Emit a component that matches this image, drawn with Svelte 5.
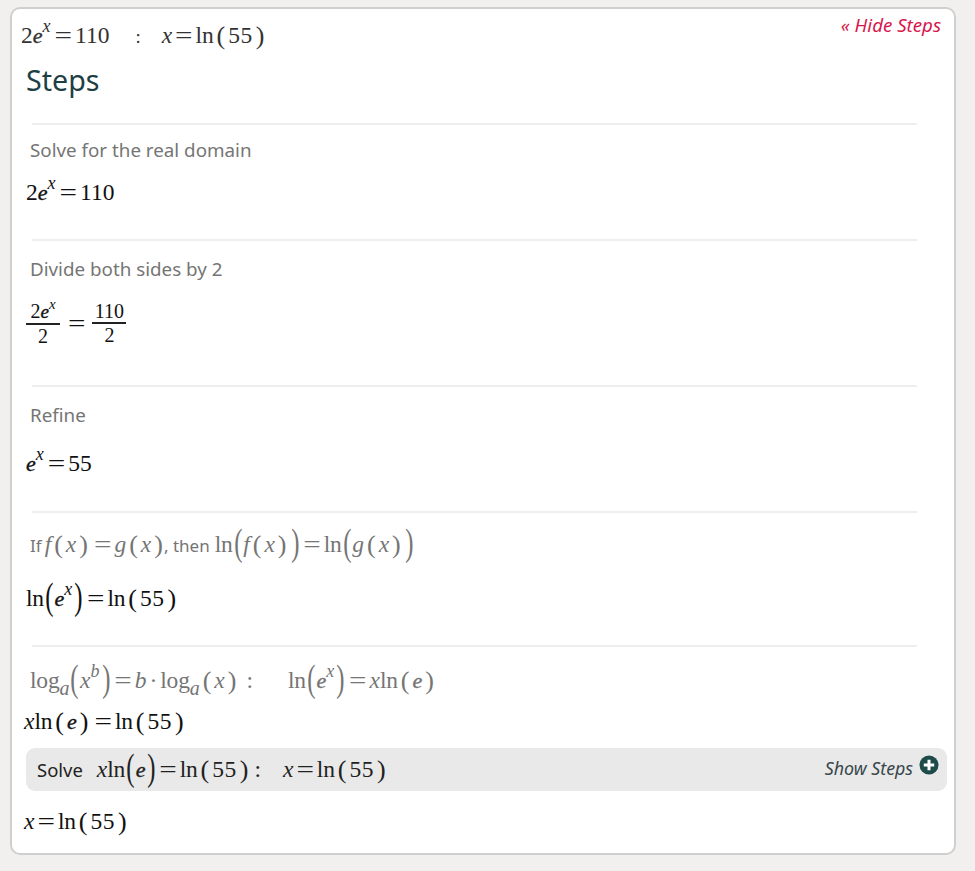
<script>
  let showSteps = $state(true);
</script>

{#snippet ex(base)}<i class="e">{base}</i><sup>x</sup>{/snippet}
{#snippet eq()}<span class="eq">=</span>{/snippet}
{#snippet ln55()}<span class="fn">ln</span><span class="p">(</span><span class="num">55</span><span class="p">)</span>{/snippet}
{#snippet big(ch)}<span class="bp">{ch}</span>{/snippet}

<div class="card">
  <div class="head">
    <div class="math head-math">
      2{@render ex('e')}{@render eq()}110<span class="sep">:</span><i>x</i>{@render eq()}{@render ln55()}
    </div>
    <button type="button" class="toggle" onclick={() => (showSteps = !showSteps)}>« Hide Steps</button>
  </div>

  <h2>Steps</h2>

  <div class="step s1">
    <div class="title">Solve for the real domain</div>
    <div class="math">2{@render ex('e')}{@render eq()}110</div>
  </div>

  <div class="step s2">
    <div class="title">Divide both sides by 2</div>
    <div class="math frac-row">
      <span class="frac"><span class="top">2{@render ex('e')}</span><span>2</span></span>
      {@render eq()}
      <span class="frac"><span class="top">110</span><span>2</span></span>
    </div>
  </div>

  <div class="step s3">
    <div class="title">Refine</div>
    <div class="math">{@render ex('e')}{@render eq()}55</div>
  </div>

  <div class="step s4">
    <div class="title math-title">
      <span class="txt if">If</span><i>f</i><span class="p">(</span><i>x</i><span class="p">)</span>{@render eq()}<i>g</i><span class="p">(</span><i>x</i><span class="p">)</span><span class="txt then">, then</span><span class="fn">ln</span>{@render big('(')}<i>f</i><span class="p">(</span><i>x</i><span class="p">)</span>{@render big(')')}{@render eq()}<span class="fn">ln</span>{@render big('(')}<i>g</i><span class="p">(</span><i>x</i><span class="p">)</span>{@render big(')')}
    </div>
    <div class="math"><span class="fn">ln</span>{@render big('(')}{@render ex('e')}{@render big(')')}{@render eq()}{@render ln55()}</div>
  </div>

  <div class="step s5">
    <div class="title math-title">
      <span class="fn">log</span><sub>a</sub>{@render big('(')}<i>x</i><sup>b</sup>{@render big(')')}{@render eq()}<i>b</i><span class="dot">·</span><span class="fn">log</span><sub>a</sub><span class="p">(</span><i>x</i><span class="p">)</span><span class="sep2">:</span><span class="fn">ln</span>{@render big('(')}{@render ex('e')}{@render big(')')}{@render eq()}<i>x</i><span class="fn">ln</span><span class="p">(</span><i class="e">e</i><span class="p">)</span>
    </div>
    <div class="math left-2"><i>x</i><span class="fn">ln</span><span class="p">(</span><i class="e">e</i><span class="p">)</span>{@render eq()}{@render ln55()}</div>
  </div>

  <div class="solve">
    <div class="solve-left">
      <span class="solve-word">Solve</span>
      <span class="math inline"><i>x</i><span class="fn">ln</span>{@render big('(')}<i class="e">e</i>{@render big(')')}{@render eq()}{@render ln55()}<span class="colon">:</span><i>x</i>{@render eq()}{@render ln55()}</span>
    </div>
    <div class="show">
      <span class="show-label">Show Steps</span>
      <svg width="20" height="20" viewBox="0 0 20 20" aria-hidden="true">
        <circle cx="10" cy="10" r="9.5" fill="#1d4b4a" />
        <path d="M10 4.8v10.4M4.8 10h10.4" stroke="#fff" stroke-width="3" />
      </svg>
    </div>
  </div>

  <div class="math final left-2"><i>x</i>{@render eq()}{@render ln55()}</div>
</div>

<style>
  :global(body) {
    background: #f1f0ee;
  }

  .card {
    box-sizing: border-box;
    width: 946px;
    height: 848px;
    margin: 7px 0 0 10px;
    padding: 0 7px 0 14px;
    background: #fff;
    border: 2px solid #cfcfcf;
    border-radius: 10px;
    font-family: "Noto Sans", sans-serif;
  }

  .head {
    display: flex;
    justify-content: space-between;
    height: 48px;
    padding-right: 6px;
  }

  .head-math {
    margin: 9px 0 0 -5px;
    color: #333;
  }

  .toggle {
    align-self: flex-start;
    margin-top: 4px;
    padding: 0;
    border: none;
    background: none;
    color: #d8164d;
    font: italic 18.7px/24px "Noto Sans", sans-serif;
  }

  h2 {
    margin: 0;
    height: 66px;
    color: #203f45;
    font-size: 28.6px;
    font-weight: 400;
    line-height: 46px;
  }

  .step {
    box-sizing: border-box;
    margin-right: 30px;
    margin-left: 6px;
    border-top: 2px solid #eeeeee;
  }

  .step .math {
    margin-left: -6px;
    color: #111;
  }

  .s1 { height: 116px; padding-top: 12px; }
  .s2 { height: 146px; padding-top: 15px; }
  .s3 { height: 126px; padding-top: 15px; }
  .s4 { height: 134px; padding-top: 11px; }
  .s5 { height: 103px; padding-top: 13px; }

  .title {
    height: 26px;
    margin-left: -2px;
    color: #757575;
    font-size: 18.8px;
    line-height: 26px;
  }

  .s1 .title { margin-bottom: 12px; }
  .s2 .title { margin-bottom: 18px; }
  .s3 .title { margin-bottom: 18px; }
  .s4 .title { margin-bottom: 17px; }
  .s5 .title { margin-bottom: 4px; }

  .math-title {
    height: 40px;
    font-family: "Liberation Serif", serif;
    font-size: 23.5px;
    line-height: 40px;
    white-space: nowrap;
  }

  .txt {
    font-family: "Noto Sans", sans-serif;
    font-size: 17px;
  }

  .if {
    margin-right: 3px;
  }

  .then {
    margin: 0 5px 0 -2px;
  }

  .math {
    font-family: "Liberation Serif", serif;
    font-size: 23.5px;
    line-height: 34px;
    white-space: nowrap;
  }

  .math.inline {
    display: inline-block;
    margin-left: 9px;
    color: #222;
  }

  .left-2 {
    margin-left: -2px;
  }

  .step .left-2 {
    margin-left: -8px;
  }

  i {
    font-style: italic;
  }

  .e {
    font-size: 22px;
    -webkit-text-stroke: 0.4px currentColor;
  }

  sup {
    font-size: 18px;
    font-style: italic;
    line-height: 0;
    vertical-align: 11px;
    margin-left: 0;
    margin-right: 1px;
  }

  sub {
    font-size: 20px;
    font-style: italic;
    line-height: 0;
    vertical-align: -7px;
  }

  .eq {
    display: inline-block;
    margin: 0 3px;
    font-size: 31px;
    line-height: 0;
    vertical-align: -2px;
    transform: scaleY(0.75);
  }

  .fn {
    letter-spacing: -0.2px;
  }

  .p {
    margin: 0 3px;
    font-size: 26px;
    font-weight: 300;
    line-height: 0;
    vertical-align: -1px;
  }

  .bp {
    display: inline-block;
    font-size: 38px;
    line-height: 0;
    vertical-align: -3px;
    transform: scaleX(0.65);
    margin: 0 -1px;
  }

  .num {
    letter-spacing: 0.5px;
  }

  .sep {
    margin: 0 21px 0 26px;
    font-size: 19px;
  }

  .sep2 {
    margin: 0 35px 0 7px;
  }

  .dot {
    margin: 0 3px;
  }

  .colon {
    margin: 0 22px 0 3px;
  }

  .frac-row {
    display: flex;
    align-items: center;
    height: 46px;
  }

  .frac-row .eq {
    margin: 0 7px 0 8px;
  }

  .frac {
    display: inline-flex;
    flex-direction: column;
    align-items: center;
    font-size: 20px;
    line-height: 22px;
  }

  .frac .top {
    min-width: 32px;
    padding: 0 1px;
    text-align: center;
    border-bottom: 2px solid #222;
  }

  .frac .e {
    font-size: 19px;
  }

  .frac sup {
    font-size: 15px;
    margin-right: 0;
    vertical-align: 9px;
  }

  .solve {
    display: flex;
    justify-content: space-between;
    align-items: center;
    box-sizing: border-box;
    height: 43px;
    padding: 0 8px 0 11px;
    background: #e9e9e9;
    border-radius: 9px;
  }

  .solve-left {
    color: #222;
    font-size: 18.5px;
  }

  .show {
    display: flex;
    align-items: center;
    gap: 6px;
    margin-top: -9px;
    color: #38474b;
    font-size: 17.8px;
    font-style: italic;
  }

  .show-label {
    margin-top: 6px;
  }

  .final {
    margin-top: 13px;
    color: #111;
  }
</style>
